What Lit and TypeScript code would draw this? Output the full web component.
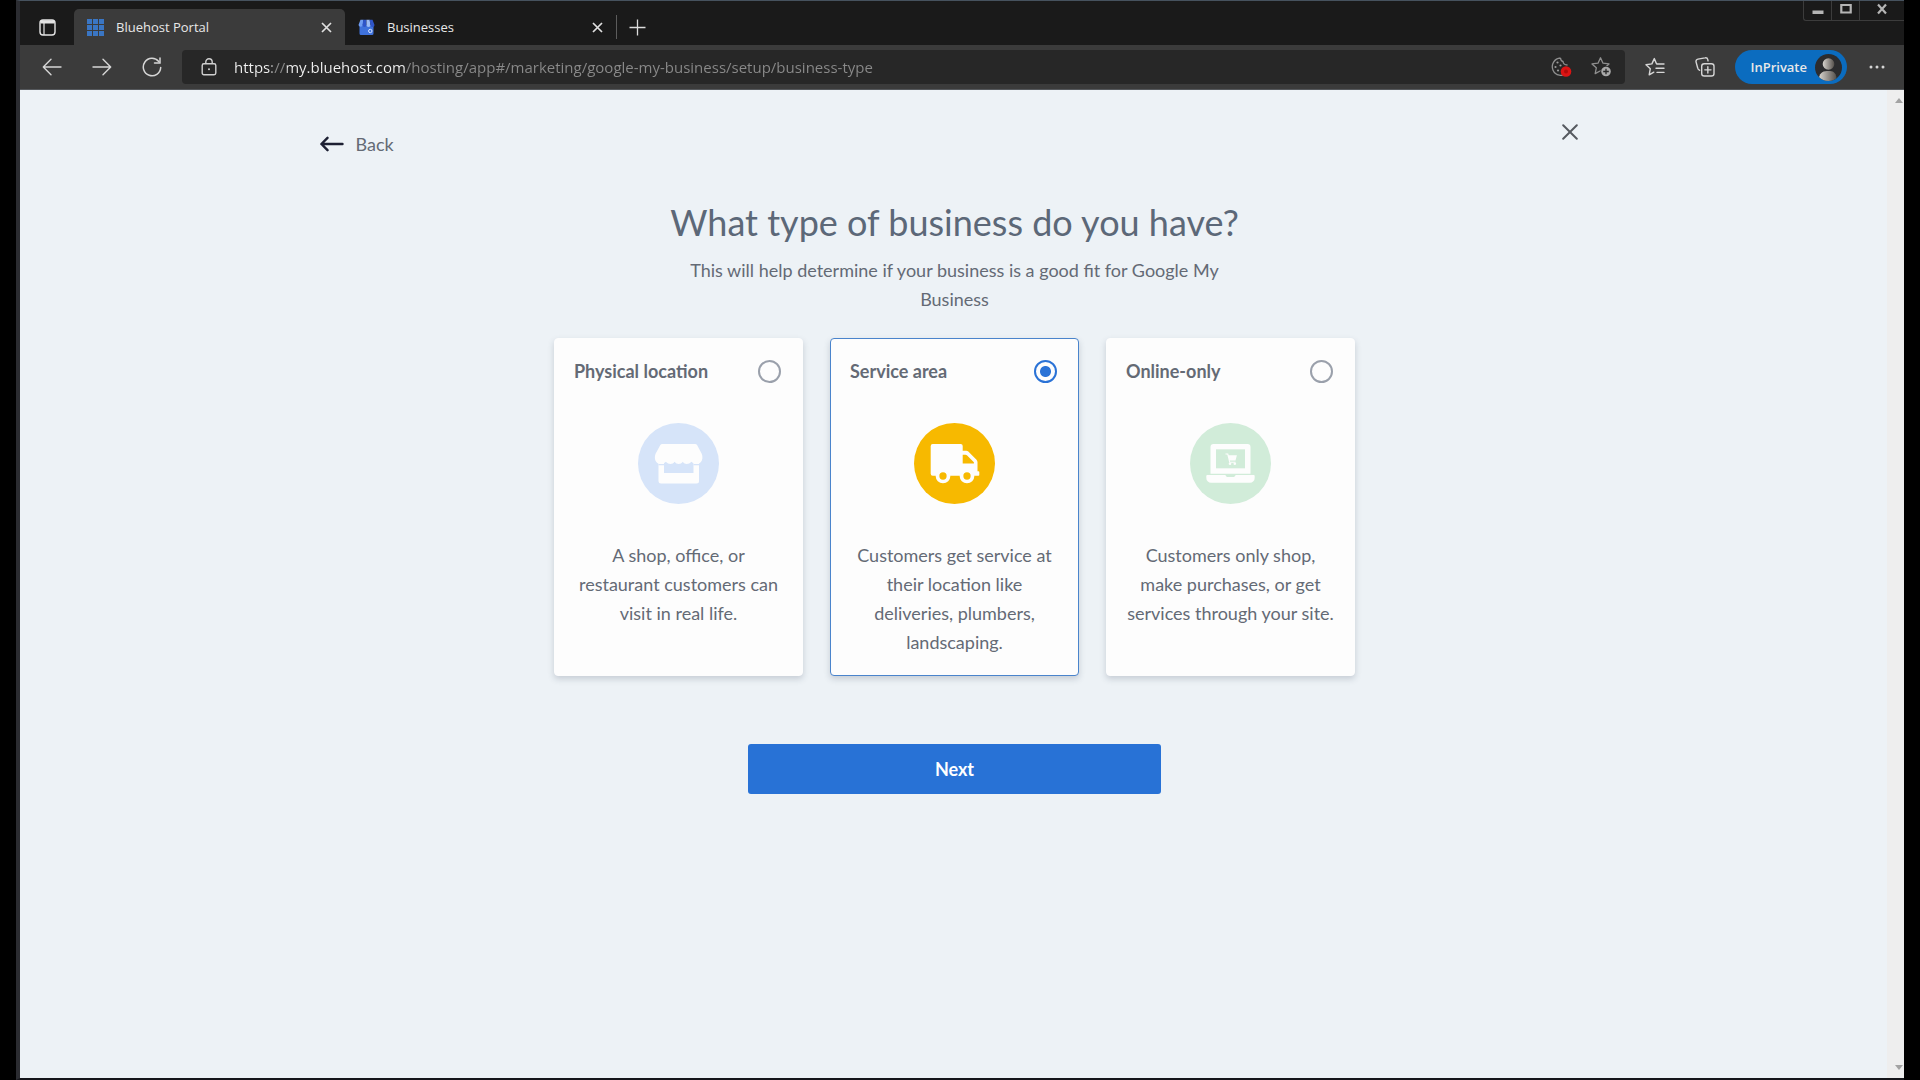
import { LitElement, html, css, svg } from "lit";
import { customElement, state } from "lit/decorators.js";

const grid = [0, 6, 12].flatMap((y) => [0, 6, 12].map((x) => ({ x, y })));

const icons = {
  tabActions: svg`<svg width="17" height="17" viewBox="0 0 17 17" fill="none" stroke="#e4e4e4" stroke-width="1.4"><rect x="1" y="1" width="15" height="15" rx="3"/><path d="M1.5 3.2h14M2 2.4h13" stroke-width="2.4"/><path d="M5 4v12" stroke-width="1.2"/></svg>`,
  bluehost: svg`<svg width="17" height="17" viewBox="0 0 17 17" fill="#3a76c4">${grid.map(
    (c) => svg`<rect x=${c.x} y=${c.y} width="5" height="5"/>`,
  )}</svg>`,
  business: svg`<svg width="17" height="17" viewBox="0 0 17 17"><path d="M1.5 6h14v8.5a1.5 1.5 0 0 1-1.5 1.5H3a1.5 1.5 0 0 1-1.5-1.5z" fill="#3f72dc"/><path d="M2.5.8h3L4.8 6a2.2 2.2 0 0 1-4.3 0z" fill="#6f9df2"/><path d="M5.3.8h3.2V6a2 2 0 0 1-4 0z" fill="#2f55c8"/><path d="M8.5.8h3.2l.8 5.2a2 2 0 0 1-4 0z" fill="#9dbcf5"/><path d="M11.5.8h3L16.500 6a2 2 0 0 1-4 0z" fill="#2f55c8"/><circle cx="12.300" cy="12" r="1.700" fill="none" stroke="#dbe7ff" stroke-width="1"/></svg>`,
  close: svg`<svg width="11" height="11" viewBox="0 0 11 11" stroke="#e0e0e0" stroke-width="1.7"><path d="M1 1l9 9M10 1l-9 9"/></svg>`,
  plus: svg`<svg width="17" height="17" viewBox="0 0 17 17" stroke="#dcdcdc" stroke-width="1.3"><path d="M8.500 0.500v16M0.500 8.500h16"/></svg>`,
  back: svg`<svg width="20" height="18" viewBox="0 0 20 18" fill="none" stroke="#d6d6d6" stroke-width="1.4" stroke-linecap="round" stroke-linejoin="round"><path d="M19 9H1.500M9 1.300L1.300 9 9 16.700"/></svg>`,
  forward: svg`<svg width="20" height="18" viewBox="0 0 20 18" fill="none" stroke="#d6d6d6" stroke-width="1.4" stroke-linecap="round" stroke-linejoin="round"><path d="M1 9h17.500M11 1.300L18.700 9 11 16.700"/></svg>`,
  reload: svg`<svg width="20" height="20" viewBox="0 0 20 20" fill="none" stroke="#d6d6d6" stroke-width="1.500" stroke-linecap="round"><path d="M18.700 10.500A8.700 8.700 0 1 1 16.800 4.600"/><path d="M18 1v5h-5.500"/></svg>`,
  lock: svg`<svg width="16" height="18" viewBox="0 0 16 18" fill="none" stroke="#d0d0d0" stroke-width="1.400"><rect x="1.200" y="5.700" width="13.600" height="11" rx="1.700"/><path d="M4.800 5.500V4a3.200 3.200 0 0 1 6.400 0v1.500"/><circle cx="8" cy="11.200" r="1" fill="#d0d0d0" stroke="none"/></svg>`,
  cookie: svg`<svg width="22" height="22" viewBox="0 0 22 22"><path d="M10.500 2A8.700 8.700 0 1 0 17 17M10.500 2c.2 2 .6 3.300 2.500 3.500.2 2 1.500 3.500 4.500 3.500" fill="none" stroke="#8f8f8f" stroke-width="1.300"/><g fill="#9a9a9a"><circle cx="7.500" cy="6.500" r="1.100"/><circle cx="5.500" cy="11" r="1.100"/><circle cx="10.500" cy="9.500" r="1.100"/><circle cx="8" cy="14.500" r="1.100"/></g><circle cx="16" cy="15.500" r="5.300" fill="#dc1414"/><circle cx="16" cy="15.500" r="2" fill="#b00b0b"/></svg>`,
  starPlus: svg`<svg width="22" height="22" viewBox="0 0 22 22"><path d="M9.500 1.800l2.500 5.400 6 .7-4.400 4 1.100 5.600-5.200-2.800-5.300 2.900 1.100-5.800L1 7.900l6-.7z" fill="none" stroke="#8f8f8f" stroke-width="1.300" stroke-linejoin="round"/><circle cx="15" cy="15.500" r="5.600" fill="#272727"/><circle cx="15" cy="15.500" r="4.800" fill="#a8a8a8"/><path d="M15 12.700v5.600M12.200 15.500h5.600" stroke="#272727" stroke-width="1.300"/></svg>`,
  favorites: svg`<svg width="20" height="20" viewBox="0 0 20 20" fill="none" stroke="#d6d6d6" stroke-width="1.400" stroke-linejoin="round" stroke-linecap="round"><path d="M11.500 6.700L9.300 1.600 6.900 6.900l-5.900.8 4.300 4-1.100 6.100 4.600-2.600"/><path d="M12 7h7M11 11.200h8M12 15.400h7"/></svg>`,
  collections: svg`<svg width="20" height="20" viewBox="0 0 20 20" fill="none" stroke="#d6d6d6" stroke-width="1.400" stroke-linecap="round"><rect x="6.700" y="6.700" width="12.300" height="12.300" rx="2.600"/><path d="M12.850 9.800v6.200M9.800 12.850H16"/><path d="M4.600 13.200A2.600 2.600 0 0 1 2.700 11L1.100 5.100a2.400 2.400 0 0 1 1.800-3L10 .9a2.400 2.400 0 0 1 2.800 1.800l.2 1.200"/></svg>`,
  avatar: svg`<svg width="27" height="27" viewBox="0 0 27 27"><defs><linearGradient id="g" x1="0" x2="1"><stop offset="0" stop-color="#d8d4ce"/><stop offset="1" stop-color="#55504c"/></linearGradient><clipPath id="c"><circle cx="13.500" cy="13.500" r="13.500"/></clipPath></defs><g clip-path="url(#c)"><rect width="27" height="27" fill="#2c2c2e"/><circle cx="13.500" cy="10" r="5.800" fill="url(#g)"/><path d="M4 27v-2.500c0-4 3-7.500 8-7.500h3c4 0 6.500 3.500 6.500 7.500V27z" fill="url(#g)"/></g></svg>`,
  dots: svg`<svg width="16" height="4" viewBox="0 0 16 4" fill="#d6d6d6"><circle cx="2" cy="2" r="1.500"/><circle cx="8" cy="2" r="1.500"/><circle cx="14" cy="2" r="1.500"/></svg>`,
  minimize: svg`<svg width="12" height="12" viewBox="0 0 12 12"><path d="M0.500 7.500h11v3.500h-11z" fill="#b5b5b5"/></svg>`,
  maximize: svg`<svg width="12" height="12" viewBox="0 0 12 12"><path d="M1.300 2h9.400v7.500H1.300z" fill="none" stroke="#b5b5b5" stroke-width="2.200"/></svg>`,
  winClose: svg`<svg width="12" height="12" viewBox="0 0 12 12" stroke="#b5b5b5" stroke-width="2.200"><path d="M2 1.500l8 9M10 1.500l-8 9"/></svg>`,
  pageBack: svg`<svg width="24" height="16" viewBox="0 0 24 16" fill="none" stroke="#1d2033" stroke-width="2.400" stroke-linecap="round" stroke-linejoin="round"><path d="M22.500 8H1.500M7.500 1.800L1.400 8l6.100 6.200"/></svg>`,
  pageClose: svg`<svg width="16" height="16" viewBox="0 0 16 16" stroke="#565a60" stroke-width="2" stroke-linecap="round"><path d="M1.200 1.200l13.600 13.600M14.800 1.200L1.200 14.800"/></svg>`,
  shop: svg`<svg width="81" height="81" viewBox="0 0 81 81"><circle cx="40.500" cy="40.500" r="40.500" fill="#d6e4f9"/><path d="M20.500 40h40.500v18a2.500 2.500 0 0 1-2.500 2.500H23a2.500 2.500 0 0 1-2.500-2.500z" fill="#fdfdfd"/><path d="M26 38h29.500v12H26z" fill="#d6e4f9"/><path d="M20.500 41.600H26M55.500 41.600H61" stroke="#d6e4f9" stroke-width="1.200"/><path d="M24.500 21H57a2.500 2.500 0 0 1 2.200 1.200l4.400 8.300c2 4.500.4 10.500-5 10.500-2.500 0-4-1-5.200-2.200-1.500 1.500-3 2.200-4.600 2.200-1.700 0-3-.8-4-2.200-1.200 1.400-2.500 2.200-4.100 2.200s-3-.8-4.100-2.200c-1 1.400-2.500 2.200-4.200 2.200-1.600 0-3-.8-4.500-2.200-1.200 1.200-2.800 2.200-5.200 2.200-5.400 0-7-6-5-10.500l4.500-8.300A2.500 2.500 0 0 1 24.500 21z" fill="#fdfdfd"/></svg>`,
  truck: svg`<svg width="81" height="81" viewBox="0 0 81 81"><circle cx="40.500" cy="40.500" r="40.500" fill="#f7b900"/><path d="M18.700 21h28a2 2 0 0 1 2 2v4.700h3.600a3 3 0 0 1 2 .9l8.200 8.200a3.500 3.500 0 0 1 1 2.500v9h1a.8.800 0 0 1 .8.800v2.800a.8.800 0 0 1-.8.800H18.700a2 2 0 0 1-2-2V23a2 2 0 0 1 2-2z" fill="#fdfdfd"/><path d="M48.700 31.700h2.800a2 2 0 0 1 1.400.6l7 7v1.200H48.700z" fill="#f7b900"/><g fill="#f7b900" stroke="#fdfdfd" stroke-width="3.700"><circle cx="29" cy="53" r="5.500"/><circle cx="53" cy="53" r="5.500"/></g></svg>`,
  laptop: svg`<svg width="81" height="81" viewBox="0 0 81 81"><circle cx="40.500" cy="40.500" r="40.500" fill="#d1ecd9"/><path d="M23.500 21h34a3 3 0 0 1 3 3v26.700H20.500V24a3 3 0 0 1 3-3z" fill="#fdfdfd"/><path d="M26 26.300h29v19H26z" fill="#d1ecd9"/><path d="M17.300 52h18.200c.3 1.400 1.200 2 2.500 2h5c1.300 0 2.200-.6 2.500-2h18.200a1 1 0 0 1 1 1v1.500a5 5 0 0 1-5 5.300H21.300a5 5 0 0 1-5-5.300V53a1 1 0 0 1 1-1z" fill="#fdfdfd"/><path d="M35.500 30.500h2.700l.5 1.700h8.200l-1.400 5.300h-5.700l.3 1.200h5.400v1H39.300l-2-8.100h-1.800z" fill="#fdfdfd"/><circle cx="40" cy="40.700" r="1.300" fill="#fdfdfd"/><circle cx="44.800" cy="40.700" r="1.300" fill="#fdfdfd"/></svg>`,
  up: svg`<svg width="8" height="5" viewBox="0 0 8 5" fill="#a3a3a3"><path d="M0 5l4-5 4 5z"/></svg>`,
  down: svg`<svg width="8" height="5" viewBox="0 0 8 5" fill="#a3a3a3"><path d="M0 0h8L4 5z"/></svg>`,
};

@customElement("browser-chrome")
class BrowserChrome extends LitElement {
  static styles = css`
    :host {
      display: block;
      font: 14px/20px "Open Sans", "Noto Sans", sans-serif;
      color: #e8e8e8;
    }
    button {
      display: flex;
      align-items: center;
      justify-content: center;
      padding: 0;
      border: 0;
      background: none;
      color: inherit;
      font: inherit;
    }
    .strip {
      display: flex;
      align-items: flex-end;
      height: 44px;
      background: #1a1a1a;
    }
    .actions {
      width: 54px;
      height: 36px;
    }
    .tab {
      display: flex;
      align-items: center;
      gap: 12px;
      width: 271px;
      height: 36px;
      box-sizing: border-box;
      padding: 0 8px 0 13px;
      border-radius: 5px 5px 0 0;
    }
    .active {
      background: #3b3b3b;
    }
    .name {
      flex: 1;
      justify-content: flex-start;
      gap: 12px;
      height: 36px;
      font-size: 13px;
    }
    .x {
      width: 22px;
      height: 22px;
    }
    .new {
      width: 42px;
      height: 24px;
      margin-bottom: 6px;
      border-left: 1px solid #5c5c5c;
    }
    .window {
      display: flex;
      align-self: flex-start;
      height: 19px;
      margin-left: auto;
      border: solid #3c3c3c;
      border-width: 0 0 1px 1px;
      border-radius: 0 0 0 3px;
    }
    .window button {
      width: 28px;
      padding-bottom: 3px;
      border-right: 1px solid #3c3c3c;
      box-sizing: border-box;
    }
    .window .last {
      width: 44px;
      border: 0;
    }
    .bar {
      display: flex;
      align-items: center;
      gap: 10px;
      height: 45px;
      box-sizing: border-box;
      padding: 0 7px 0 12px;
      background: #3b3b3b;
      border-bottom: 1px solid #55585c;
    }
    .tool {
      width: 40px;
      height: 34px;
    }
    .address {
      display: flex;
      flex: 1;
      align-items: center;
      gap: 17px;
      height: 34px;
      padding: 0 11px 0 19px;
      border-radius: 4px;
      background: #272727;
    }
    .url {
      flex: 1;
      min-width: 0;
      height: 32px;
      padding: 0;
      border: 0;
      outline: 0;
      font: 15px/32px "Open Sans", "Noto Sans", sans-serif;
      color: transparent;
      background: linear-gradient(
        90deg,
        #f2f2f2 38px,
        #8a8a8a 38px 53px,
        #f2f2f2 53px 171px,
        #8a8a8a 171px
      );
      -webkit-background-clip: text;
      background-clip: text;
    }
    .small {
      width: 24px;
      height: 30px;
    }
    .profile {
      gap: 8px;
      height: 34px;
      padding: 0 5px 0 15px;
      border-radius: 17px;
      background: #0b6cbf;
      font-weight: 600;
      font-size: 13px;
    }
  `;

  render() {
    return html`
      <div class="strip">
        <button class="actions" aria-label="Tab actions">${icons.tabActions}</button>
        <div class="tab active">
          <button class="name">${icons.bluehost}Bluehost Portal</button>
          <button class="x" aria-label="Close tab">${icons.close}</button>
        </div>
        <div class="tab">
          <button class="name">${icons.business}Businesses</button>
          <button class="x" aria-label="Close tab">${icons.close}</button>
        </div>
        <button class="new" aria-label="New tab">${icons.plus}</button>
        <div class="window">
          <button aria-label="Minimize">${icons.minimize}</button>
          <button aria-label="Maximize">${icons.maximize}</button>
          <button class="last" aria-label="Close window">${icons.winClose}</button>
        </div>
      </div>
      <div class="bar">
        <button class="tool" aria-label="Back">${icons.back}</button>
        <button class="tool" aria-label="Forward">${icons.forward}</button>
        <button class="tool" aria-label="Reload">${icons.reload}</button>
        <div class="address">
          ${icons.lock}
          <input
            class="url"
            type="text"
            aria-label="Address"
            spellcheck="false"
            .value=${"https://my.bluehost.com/hosting/app#/marketing/google-my-business/setup/business-type"}
          />
          <button class="small" aria-label="Cookies">${icons.cookie}</button>
          <button class="small" aria-label="Add favorite">${icons.starPlus}</button>
        </div>
        <button class="tool" aria-label="Favorites">${icons.favorites}</button>
        <button class="tool" aria-label="Collections">${icons.collections}</button>
        <button class="profile">InPrivate${icons.avatar}</button>
        <button class="tool" aria-label="Menu">${icons.dots}</button>
      </div>
    `;
  }
}

const choices = [
  {
    id: "physical",
    title: "Physical location",
    icon: icons.shop,
    text: "A shop, office, or restaurant customers can visit in real life.",
  },
  {
    id: "service",
    title: "Service area",
    icon: icons.truck,
    text: "Customers get service at their location like deliveries, plumbers, landscaping.",
  },
  {
    id: "online",
    title: "Online-only",
    icon: icons.laptop,
    text: "Customers only shop, make purchases, or get services through your site.",
  },
];

@customElement("business-type")
class BusinessType extends LitElement {
  @state() private selected = "service";

  static styles = css`
    :host {
      display: block;
      padding: 0 14px 0 16px;
      font: 18px/29px Lato, "Open Sans", sans-serif;
      color: #646a75;
    }
    button {
      padding: 0;
      border: 0;
      background: none;
      color: inherit;
      font: inherit;
    }
    .top {
      display: flex;
      justify-content: space-between;
      align-items: flex-start;
      max-width: 1270px;
      margin: 0 auto;
      padding-top: 22px;
    }
    .back {
      display: flex;
      align-items: center;
      gap: 12px;
      height: 40px;
      margin-top: 12px;
    }
    .close {
      display: grid;
      place-items: center;
      width: 40px;
      height: 40px;
    }
    .title {
      margin: 36px 0 12px;
      font-size: 36px;
      line-height: 44px;
      font-weight: 400;
      color: #5c6878;
      text-align: center;
    }
    .lead {
      max-width: 551px;
      margin: 0 auto 24px;
      text-align: center;
    }
    .cards {
      display: grid;
      grid-template-columns: repeat(3, 1fr);
      gap: 27px;
      max-width: 801px;
      min-width: 0;
      margin: 0 auto;
      padding: 0;
      border: 0;
    }
    .card {
      display: flex;
      flex-direction: column;
      align-items: center;
      gap: 37px;
      padding: 18px 19px;
      border: 1px solid #fdfdfd;
      border-radius: 4px;
      background: #fdfdfd;
      box-shadow: 0 3px 6px rgb(60 75 95 / 22%);
    }
    .card:has(:checked) {
      border-color: #4a84cc;
    }
    .head {
      display: flex;
      align-items: center;
      justify-content: space-between;
      align-self: stretch;
      font-weight: 700;
    }
    .radio {
      appearance: none;
      width: 23px;
      height: 23px;
      margin: 0 2px 0 0;
      border: 2px solid #9aa0ab;
      border-radius: 50%;
    }
    .radio:checked {
      border-color: #2a72d6;
      background: radial-gradient(circle, #2a72d6 5px, transparent 6px);
    }
    .text {
      margin: 0;
      text-align: center;
    }
    .next {
      display: block;
      width: 100%;
      max-width: 413px;
      height: 50px;
      margin: 68px auto 0;
      border-radius: 3px;
      background: #2872d6;
      color: #fff;
      font-weight: 700;
    }
  `;

  render() {
    return html`
      <div class="top">
        <button class="back">${icons.pageBack}Back</button>
        <button class="close" aria-label="Close">${icons.pageClose}</button>
      </div>
      <h1 class="title">What type of business do you have?</h1>
      <p class="lead">This will help determine if your business is a good fit for Google My Business</p>
      <fieldset class="cards" aria-label="Business type">
        ${choices.map(
          (c) => html`
            <label class="card" for=${c.id}>
              <span class="head">
                ${c.title}
                <input
                  class="radio"
                  type="radio"
                  name="business-type"
                  id=${c.id}
                  .checked=${this.selected === c.id}
                  @change=${() => (this.selected = c.id)}
                />
              </span>
              ${c.icon}
              <span class="text">${c.text}</span>
            </label>
          `,
        )}
      </fieldset>
      <button class="next">Next</button>
    `;
  }
}

@customElement("app-root")
class AppRoot extends LitElement {
  static styles = css`
    :host {
      display: flex;
      flex-direction: column;
      min-height: 100vh;
      box-sizing: border-box;
      padding: 0 16px;
      background: #000;
    }
    .frame {
      display: flex;
      flex: 1;
      flex-direction: column;
      border: solid #15161b;
      border-width: 1px 0 2px 4px;
      border-top-color: #46525e;
      border-left-color: #2b2c31;
    }
    .view {
      display: flex;
      flex: 1;
      background: #edf2f6;
    }
    .page {
      flex: 1;
    }
    .scroll {
      display: flex;
      flex-direction: column;
      justify-content: space-between;
      align-items: flex-end;
      width: 17px;
      box-sizing: border-box;
      padding: 8px 1px;
      background: #eee;
    }
  `;

  render() {
    return html`
      <div class="frame">
        <browser-chrome></browser-chrome>
        <div class="view">
          <business-type class="page"></business-type>
          <div class="scroll" aria-hidden="true">${icons.up}${icons.down}</div>
        </div>
      </div>
    `;
  }
}
